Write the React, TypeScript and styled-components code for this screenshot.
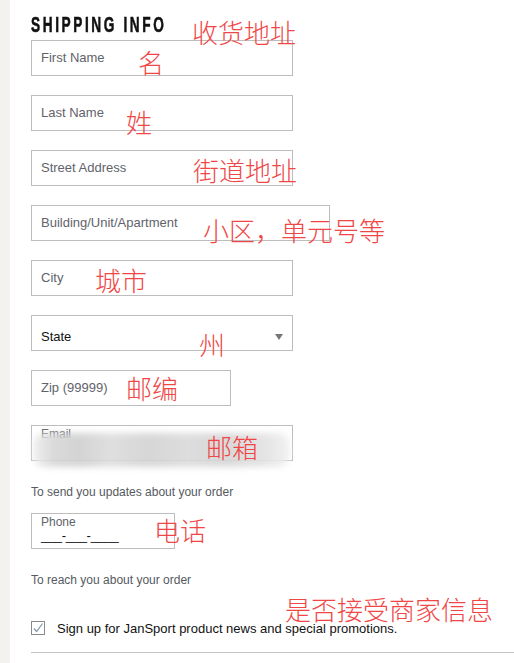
import styled, { createGlobalStyle } from "styled-components";

const GlobalStyle = createGlobalStyle`
  html, body {
    margin: 0;
    padding: 0;
    background: #ffffff;
  }
  body {
    font-family: "Liberation Sans", Arial, sans-serif;
  }
`;

const Page = styled.div`
  display: flex;
  width: 514px;
  height: 663px;
  overflow: hidden;
  background: #ffffff;
`;

const Strip = styled.div`
  width: 10px;
  flex: none;
  background: #f3f2ee;
`;

const Panel = styled.div`
  flex: 1;
  padding: 12px 0 0 21px;
  display: flex;
  flex-direction: column;
`;

const Heading = styled.h2`
  margin: 0 0 3px;
  height: 25px;
  display: flex;
`;

// the shop uses a bold condensed face; squeeze a bold sans to match
const HeadingText = styled.span`
  display: inline-block;
  font-family: "Liberation Sans", Arial, sans-serif;
  font-weight: 700;
  font-size: 22px;
  line-height: 25px;
  letter-spacing: 4.2px;
  color: #111111;
  -webkit-text-stroke: 0.6px #111111;
  text-transform: uppercase;
  white-space: nowrap;
  transform: scaleX(0.62);
  transform-origin: left center;
`;

const Fields = styled.div`
  display: flex;
  flex-direction: column;
  gap: 19px;
`;

const Row = styled.div`
  position: relative;
`;

const Box = styled.div<{ $w: number }>`
  box-sizing: border-box;
  width: ${(p) => p.$w}px;
  height: 36px;
  border: 1px solid #bdbdbd;
  background: #ffffff;
  padding: 0 9px;
  display: flex;
  align-items: center;
  position: relative;
`;

const Placeholder = styled.span<{ $dark?: boolean }>`
  font-size: 13px;
  color: ${(p) => (p.$dark ? "#111111" : "#5f636b")};
  margin-top: ${(p) => (p.$dark ? "6px" : "-2px")};
`;

const Arrow = styled.span`
  position: absolute;
  right: 9px;
  top: 18px;
  width: 0;
  height: 0;
  border-left: 4px solid transparent;
  border-right: 4px solid transparent;
  border-top: 6px solid #777777;
`;

const StackBox = styled(Box)`
  flex-direction: column;
  align-items: flex-start;
  justify-content: flex-start;
  padding-top: 1px;
`;

const SmallLabel = styled.span`
  font-size: 12px;
  color: #5f636b;
  line-height: 14px;
`;

const Mask = styled.span`
  font-size: 13px;
  color: #111111;
  line-height: 14px;
  letter-spacing: -0.3px;
`;

const Blur = styled.div`
  position: absolute;
  left: 1px;
  top: 7px;
  width: 257px;
  height: 34px;
  border-radius: 12px;
  background: linear-gradient(
    90deg,
    #eeeeee 0%,
    #d6d6d6 8%,
    #cfcfcf 18%,
    #dcdcdc 30%,
    #d2d2d2 45%,
    #dadada 60%,
    #d5d5d5 75%,
    #e2e2e2 90%,
    #f0f0f0 100%
  );
  filter: blur(3px);
  opacity: 0.9;
`;

const Help = styled.p<{ $top: number; $bottom: number }>`
  margin: ${(p) => p.$top}px 0 ${(p) => p.$bottom}px;
  font-size: 12px;
  line-height: 14px;
  color: #555a60;
`;

const CheckRow = styled.label`
  position: relative;
  display: flex;
  align-items: center;
  gap: 12px;
  height: 16px;
  font-size: 13px;
  color: #111111;
`;

const Divider = styled.hr`
  margin: 16px 0 0;
  border: none;
  height: 1px;
  background: #c4c4c4;
`;

const Note = styled.span<{ $x: number; $y: number }>`
  position: absolute;
  left: ${(p) => p.$x}px;
  top: ${(p) => p.$y}px;
  font-family: "Noto Sans CJK SC", sans-serif;
  font-size: 26px;
  line-height: 26px;
  font-weight: 300;
  color: #f04646;
  white-space: nowrap;
  pointer-events: none;
  z-index: 2;
`;

const Check = () => (
  <svg width="14" height="14" viewBox="0 0 14 14">
    <rect x="0.5" y="0.5" width="13" height="13" fill="#fff" stroke="#8a8a8a" />
    <path d="M3 7.5 L5.6 10.5 L11.5 2.5" fill="none" stroke="#7f96b0" strokeWidth="1.2" />
  </svg>
);

type FieldProps = {
  label: string;
  w?: number;
  note?: string;
  nx?: number;
  ny?: number;
};

const Field = ({ label, w = 262, note, nx = 0, ny = 0 }: FieldProps) => (
  <Row>
    <Box $w={w}>
      <Placeholder>{label}</Placeholder>
    </Box>
    {note && (
      <Note $x={nx} $y={ny}>
        {note}
      </Note>
    )}
  </Row>
);

export default function App() {
  return (
    <Page>
      <GlobalStyle />
      <Strip />
      <Panel>
        <Heading>
          <HeadingText>Shipping Info</HeadingText>
        </Heading>
        <Fields>
          <Row>
            <Box $w={262}>
              <Placeholder>First Name</Placeholder>
            </Box>
            <Note $x={161} $y={-21}>收货地址</Note>
            <Note $x={107} $y={9}>名</Note>
          </Row>
          <Field label="Last Name" note="姓" nx={95} ny={14} />
          <Field label="Street Address" note="街道地址" nx={162} ny={7} />
          <Field label="Building/Unit/Apartment" w={299} note="小区，单元号等" nx={172} ny={12} />
          <Field label="City" note="城市" nx={64} ny={7} />
          <Row>
            <Box $w={262}>
              <Placeholder $dark>State</Placeholder>
              <Arrow />
            </Box>
            <Note $x={168} $y={16}>州</Note>
          </Row>
          <Field label="Zip (99999)" w={200} note="邮编" nx={95} ny={5} />
          <Row>
            <StackBox $w={262}>
              <SmallLabel>Email</SmallLabel>
              <Blur />
            </StackBox>
            <Note $x={175} $y={9}>邮箱</Note>
          </Row>
        </Fields>
        <Help $top={24} $bottom={14}>To send you updates about your order</Help>
        <Row>
          <StackBox $w={144}>
            <SmallLabel>Phone</SmallLabel>
            <Mask>___-___-____</Mask>
          </StackBox>
          <Note $x={123} $y={4}>电话</Note>
        </Row>
        <Help $top={24} $bottom={33}>To reach you about your order</Help>
        <CheckRow>
          <Check />
          Sign up for JanSport product news and special promotions.
          <Note $x={254} $y={-24}>是否接受商家信息</Note>
        </CheckRow>
        <Divider />
      </Panel>
    </Page>
  );
}
